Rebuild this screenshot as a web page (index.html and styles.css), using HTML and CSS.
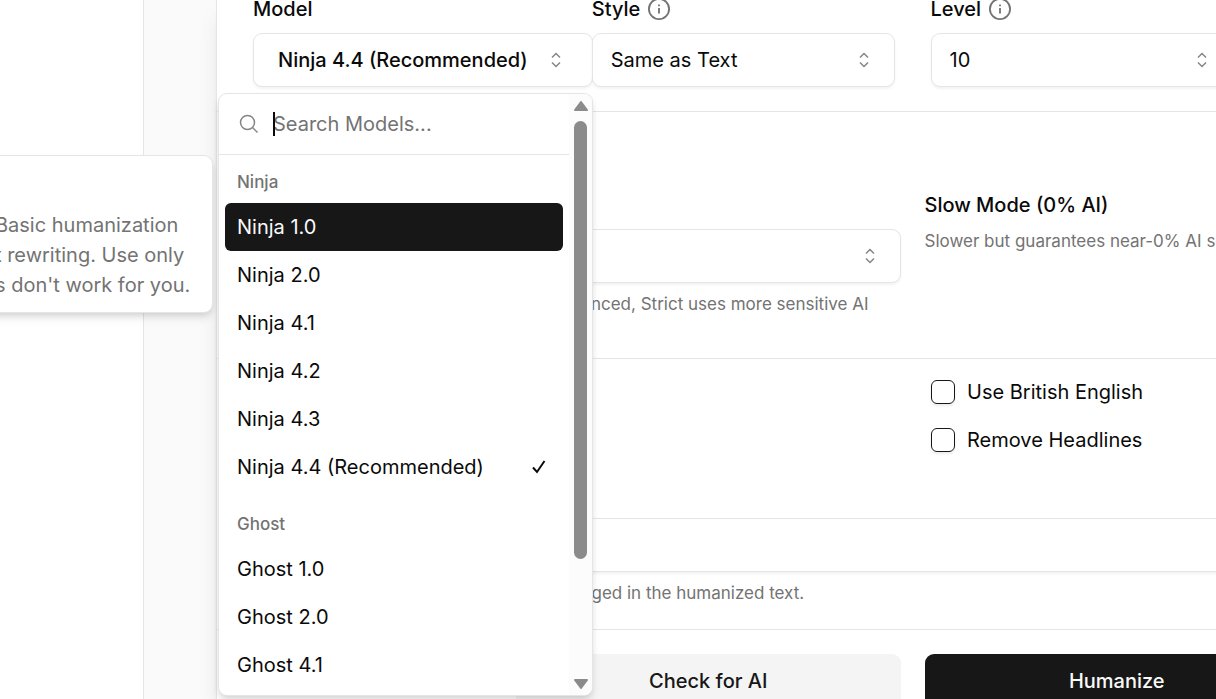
FILE: index.html
```html
<!DOCTYPE html>
<html lang="en">
<head>
<meta charset="utf-8">
<meta name="viewport" content="width=device-width, initial-scale=1">
<title>Humanizer settings</title>
<link rel="stylesheet" href="styles.css">
</head>
<body>
<svg class="sprite" aria-hidden="true">
  <symbol id="chevrons" viewBox="0 0 24 24"><path d="m8 9.500 4-4 4 4M8 14.500l4 4 4-4" fill="none" stroke="currentColor" stroke-width="1.500"/></symbol>
  <symbol id="info" viewBox="0 0 24 24"><g fill="none" stroke="currentColor" stroke-width="2"><circle cx="12" cy="12" r="11"/><path d="M12 11v6M12 7v2"/></g></symbol>
</svg>
<div class="page">
  <aside class="sidebar"></aside>
  <div class="gutter"></div>
  <main class="dialog">
    <section class="fields">
      <div class="field">
        <div class="label-row"><span id="model-label">Model</span></div>
        <button class="trigger" type="button" role="combobox" aria-expanded="true" aria-controls="models" aria-labelledby="model-label model-value">
          <span id="model-value">Ninja 4.4 (Recommended)</span>
          <svg class="chevrons"><use href="#chevrons"/></svg>
        </button>
        <div class="popover">
          <div class="popover-body">
            <div class="search">
              <svg class="search-icon" viewBox="0 0 20 20"><g fill="none" stroke="currentColor" stroke-width="1.500"><circle cx="8.500" cy="8.500" r="7"/><path d="m13.500 13.500 5 5"/></g></svg>
              <span class="caret"></span>
              <input type="text" placeholder="Search Models..." aria-label="Search models">
            </div>
            <div id="models" role="listbox" aria-label="Models">
              <div class="group" role="group" aria-labelledby="g-ninja">
                <div class="group-title" id="g-ninja">Ninja</div>
                <div class="option active" role="option" aria-selected="false">Ninja 1.0</div>
                <div class="option" role="option" aria-selected="false">Ninja 2.0</div>
                <div class="option" role="option" aria-selected="false">Ninja 4.1</div>
                <div class="option" role="option" aria-selected="false">Ninja 4.2</div>
                <div class="option" role="option" aria-selected="false">Ninja 4.3</div>
                <div class="option" role="option" aria-selected="true">Ninja 4.4 (Recommended)
                  <svg class="check" viewBox="0 0 16 16"><path d="m2 8.500 4 4.500 7.500-11" fill="none" stroke="currentColor" stroke-width="2"/></svg>
                </div>
              </div>
              <div class="group" role="group" aria-labelledby="g-ghost">
                <div class="group-title" id="g-ghost">Ghost</div>
                <div class="option" role="option" aria-selected="false">Ghost 1.0</div>
                <div class="option" role="option" aria-selected="false">Ghost 2.0</div>
                <div class="option" role="option" aria-selected="false">Ghost 4.1</div>
              </div>
            </div>
          </div>
          <div class="scrollbar" aria-hidden="true">
            <svg class="arrow" viewBox="0 0 14 10"><path d="M7 1 13 9H1Z" fill="currentColor" stroke="currentColor" stroke-width="2" stroke-linejoin="round"/></svg>
            <div class="track"><div class="thumb"></div></div>
            <svg class="arrow" viewBox="0 0 14 10"><path d="M7 9 13 1H1Z" fill="currentColor" stroke="currentColor" stroke-width="2" stroke-linejoin="round"/></svg>
          </div>
        </div>
      </div>
      <div class="field">
        <div class="label-row"><label for="style">Style</label><svg class="info"><use href="#info"/></svg></div>
        <div class="select"><select id="style"><option>Same as Text</option></select><svg class="chevrons"><use href="#chevrons"/></svg></div>
      </div>
      <div class="field">
        <div class="label-row"><label for="level">Level</label><svg class="info"><use href="#info"/></svg></div>
        <div class="select"><select id="level"><option>10</option></select><svg class="chevrons"><use href="#chevrons"/></svg></div>
      </div>
    </section>

    <section class="modes">
      <div class="detector">
        <div class="select"><select aria-label="Detector"><option></option></select><svg class="chevrons"><use href="#chevrons"/></svg></div>
        <p class="hint detector-hint">Balanced, Strict uses more sensitive AI</p>
      </div>
      <div class="slow">
        <h2>Slow Mode (0% AI)</h2>
        <p class="hint">Slower but guarantees near-0% AI score</p>
      </div>
    </section>

    <section class="options">
      <div class="checks">
        <label><input type="checkbox">Use British English</label>
        <label><input type="checkbox">Remove Headlines</label>
      </div>
      <input class="keywords" type="text" aria-label="Protected words">
      <p class="hint keywords-hint">unchanged in the humanized text.</p>
    </section>

    <footer class="actions">
      <button class="secondary" type="button">Check for AI</button>
      <button class="primary" type="button">Humanize</button>
    </footer>
  </main>
  <div class="tooltip" role="tooltip">
    Basic humanization<br>t rewriting. Use only<br>s don't work for you.
  </div>
</div>
</body>
</html>
```
FILE: styles.css
```css
* { box-sizing: border-box; }
body {
  margin: 0;
  background: #fff;
  color: #0a0a0a;
  font: 400 20px/30px Inter, "Liberation Sans", sans-serif;
}
h2, p { margin: 0; font-size: inherit; }
button, input, select { font: inherit; color: inherit; margin: 0; }
svg { flex: none; display: block; }
.sprite { position: absolute; width: 0; height: 0; }

.page {
  position: relative;
  display: flex;
  height: 100vh;
  overflow: hidden;
}
.sidebar { flex: 0 0 144px; border-right: 1px solid #e5e5e5; }
.gutter { flex: 0 0 72px; background: #fafafa; }
.dialog {
  flex: 1 0 1392px;
  border-left: 1px solid #e5e5e5;
  background: #fff;
  box-shadow: 0 15px 22px -4px rgba(0, 0, 0, 0.1), 0 6px 9px -6px rgba(0, 0, 0, 0.1);
}
.dialog > section { border-bottom: 1px solid #e5e5e5; }

.fields {
  display: grid;
  grid-template-columns: repeat(4, 1fr);
  gap: 36px;
  padding: 0 36px 24px;
}
.field { position: relative; display: grid; gap: 15px; min-width: 0; }
.label-row {
  display: flex;
  align-items: center;
  gap: 8px;
  height: 18px;
  line-height: 18px;
  font-weight: 500;
}
.info { width: 22px; height: 22px; color: #737373; }
.trigger, select, .keywords {
  height: 54px;
  border: 1px solid #e5e5e5;
  border-radius: 9px;
  background: #fff;
  box-shadow: 0 2px 3px rgba(0, 0, 0, 0.05);
}
.trigger {
  display: flex;
  align-items: center;
  justify-content: space-between;
  width: 340px;
  padding: 0 24px;
  font-weight: 500;
  white-space: nowrap;
}
.chevrons { width: 24px; height: 24px; color: #858585; }
.select { display: grid; align-items: center; }
.select > * { grid-area: 1 / 1; }
.select select { appearance: none; width: 100%; padding: 0 18px; }
.select .chevrons { justify-self: end; margin-right: 19px; pointer-events: none; }

.popover {
  position: absolute;
  z-index: 2;
  top: 93px;
  left: -35px;
  display: flex;
  width: 375px;
  border: 1px solid #e5e5e5;
  border-radius: 9px;
  background: #fff;
  overflow: hidden;
  box-shadow: 0 6px 9px -1px rgba(0, 0, 0, 0.1), 0 3px 6px -2px rgba(0, 0, 0, 0.1);
}
.popover-body { flex: 1; min-width: 0; }
.search {
  position: relative;
  display: flex;
  align-items: center;
  gap: 14px;
  height: 61px;
  padding: 0 20px;
  border-bottom: 1px solid #e5e5e5;
}
.search-icon { width: 20px; height: 20px; color: #858585; }
.search input { flex: 1; min-width: 0; padding: 0; border: 0; outline: 0; background: none; }
.search input::placeholder { color: #737373; opacity: 1; }
.caret { position: absolute; left: 54px; top: 18px; width: 2px; height: 24px; background: #0a0a0a; }
.group { padding: 6px; }
.group-title { padding: 6px 12px; font-size: 17px; font-weight: 500; color: #737373; }
.option {
  display: flex;
  align-items: center;
  justify-content: space-between;
  height: 48px;
  padding: 0 16px 0 12px;
  border-radius: 6px;
}
.option.active { background: #171717; color: #fafafa; }
.check { width: 16px; height: 16px; }
.scrollbar {
  flex: none;
  display: flex;
  flex-direction: column;
  align-items: center;
  gap: 10px;
  width: 23px;
  padding: 7px 0 6px;
  background: #fcfcfc;
}
.arrow { width: 14px; height: 10px; color: #8b8b8b; }
.track { flex: 1; width: 13px; }
.thumb { height: 80%; border-radius: 7px; background: #8b8b8b; }

.hint { font-size: 17px; color: #737373; white-space: nowrap; line-height: 24px; }
.modes {
  display: grid;
  grid-template-columns: 1fr 1fr;
  gap: 24px;
  padding: 78px 36px 42px;
}
.detector { padding-top: 39px; }
.detector-hint { margin-top: 9px; padding-right: 32px; text-align: right; }
.slow { display: grid; gap: 9px; align-content: start; }
.slow h2 { font-weight: 500; }

.options { padding: 21px 36px 24px; }
.checks { display: grid; gap: 24px; padding-left: 678px; }
.checks label { display: flex; align-items: center; gap: 12px; height: 24px; }
.checks input {
  appearance: none;
  width: 24px;
  height: 24px;
  border: 1px solid #171717;
  border-radius: 6px;
  box-shadow: 0 2px 3px rgba(0, 0, 0, 0.08);
}
.keywords { display: block; width: 100%; margin-top: 66px; }
.keywords-hint { margin-top: 9px; padding-left: 279px; }

.actions {
  display: grid;
  grid-template-columns: 1fr 1fr;
  gap: 24px;
  padding: 24px 299px;
}
.actions button { height: 54px; border: 0; border-radius: 9px; font-weight: 500; }
.secondary { background: #f4f4f4; color: #171717; }
.primary { background: #171717; color: #fafafa; }

.tooltip {
  position: absolute;
  z-index: 3;
  left: -24px;
  top: 155px;
  width: 237px;
  padding: 54px 0 12px 18px;
  border: 1px solid #e5e5e5;
  border-radius: 9px;
  background: #fff;
  color: #737373;
  white-space: nowrap;
  box-shadow: 0 6px 9px -1px rgba(0, 0, 0, 0.1), 0 3px 6px -2px rgba(0, 0, 0, 0.1);
}
```
